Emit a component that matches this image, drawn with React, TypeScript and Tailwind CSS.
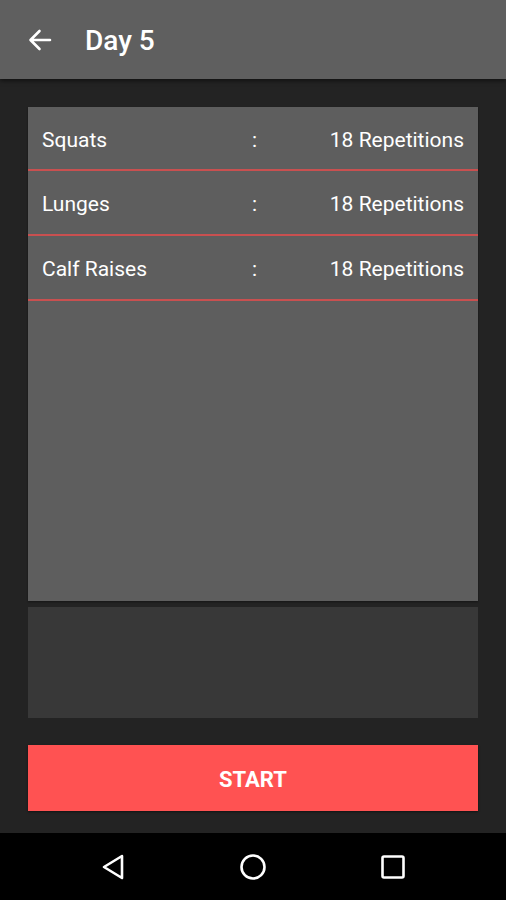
const exercises = [
  { name: "Squats", reps: "18 Repetitions" },
  { name: "Lunges", reps: "18 Repetitions" },
  { name: "Calf Raises", reps: "18 Repetitions" },
];

export default function App() {
  return (
    <div className="w-[506px] h-[900px] flex flex-col bg-[#232323] text-white" style={{ fontFamily: "Roboto, 'Liberation Sans', sans-serif" }}>
      {/* toolbar */}
      <div className="h-[79px] shrink-0 bg-[#5f5f5f] flex items-center shadow-[0_2px_4px_rgba(0,0,0,0.5)] relative z-10">
        <svg className="ml-[28px]" width="24" height="24" viewBox="0 0 24 24" fill="none" stroke="white" strokeWidth="2.6" strokeLinecap="round" strokeLinejoin="round">
          <path d="M22 12H3 M11.5 3 L2.5 12 L11.5 21" />
        </svg>
        <span className="ml-[33px] pt-[3px] text-[28px] font-medium">Day 5</span>
      </div>

      <div className="flex-1 flex flex-col px-[28px] pt-[28px] pb-[22px]">
        {/* exercise list */}
        <div className="h-[494px] w-[450px] bg-[#5e5e5e] shadow-[0_1px_2px_rgba(0,0,0,0.4)]">
          {exercises.map((ex, i) => (
            <div key={ex.name} className={`${i === 0 ? "h-[64px]" : "h-[65px]"} flex items-center border-b-2 border-[#c95050] px-[14px] pt-[5px] text-[21px]`}>
              <span className="w-[210px]">{ex.name}</span>
              <span className="w-[20px]">:</span>
              <span className="flex-1 text-right">{ex.reps}</span>
            </div>
          ))}
        </div>

        {/* empty lower panel */}
        <div className="mt-[6px] h-[111px] w-[450px] bg-[#383838]" />

        <button className="mt-[27px] h-[66px] w-[450px] bg-[#ff5252] text-white font-bold text-[22px] pt-[2px] shadow-[0_1px_2px_rgba(0,0,0,0.5)]">
          START
        </button>
      </div>

      {/* nav bar */}
      <div className="h-[67px] shrink-0 bg-black flex items-center justify-center gap-[114px]">
        <svg width="26" height="28" viewBox="0 0 26 28" fill="none" stroke="white" strokeWidth="2.6" strokeLinejoin="round">
          <path d="M22 3 L4 14 L22 25 Z" />
        </svg>
        <svg width="26" height="28" viewBox="0 0 26 28" fill="none" stroke="white" strokeWidth="2.6">
          <circle cx="13" cy="14" r="11.5" />
        </svg>
        <svg width="26" height="26" viewBox="0 0 26 26" fill="none" stroke="white" strokeWidth="2.6">
          <rect x="2.5" y="2.5" width="21" height="21" rx="1.5" />
        </svg>
      </div>
    </div>
  );
}
